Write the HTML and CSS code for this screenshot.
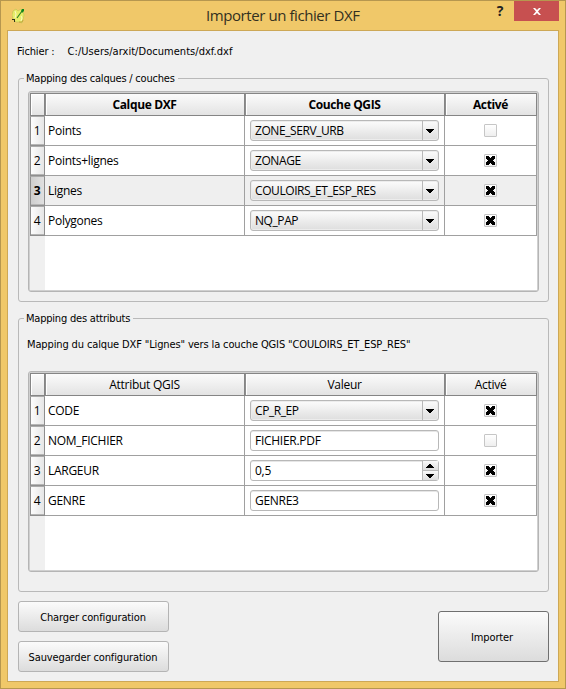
FILE: index.html
```html
<!DOCTYPE html>
<html lang="fr">
<head>
<meta charset="utf-8">
<title>Importer un fichier DXF</title>
<link rel="stylesheet" href="styles.css">
</head>
<body>
<svg class="defs" width="0" height="0">
  <symbol id="cross" viewBox="0 0 11 11"><path d="M1 1h3v1h1v1h1v-1h1v-1h3v3h-1v1h-1v1h1v1h1v3h-3v-1h-1v-1h-1v1h-1v1h-3v-3h1v-1h1v-1h-1v-1h-1z"/></symbol>
  <symbol id="down" viewBox="0 0 8 4"><path d="M0 0h8v1h-1v1h-1v1h-1v1h-2v-1h-1v-1h-1v-1h-1z"/></symbol>
  <symbol id="up" viewBox="0 0 8 4"><path d="M0 4h8v-1h-1v-1h-1v-1h-1v-1h-2v1h-1v1h-1v1h-1z"/></symbol>
</svg>
<div class="window">
  <header class="titlebar">
    <svg class="logo" width="13" height="16" viewBox="0 0 13 16">
      <path d="M1 3l3-2 2 2 3-2 2 2 1 4-1 5-1 3-3-1-3 0-3-3-1-4z" fill="#e6ec68" stroke="#c0bd55" stroke-width=".6"/>
      <path d="M3 3l1 3-1 4M9 8l1 2-1 3" fill="none" stroke="#faf8c0"/>
      <path d="M10 1h2v2l-2 2-1-2z" fill="#0f8a1c"/>
      <path d="M10 3L5 10" fill="none" stroke="#27801f" stroke-width="1.1"/>
      <path d="M0 11h3v3H2v-2H0z" fill="#30351a"/>
      <path d="M7 14h3l1-2" fill="none" stroke="#b99a35" stroke-width=".8"/>
    </svg>
    <h1>Importer un fichier DXF</h1>
    <span class="help">?</span>
    <button class="close" aria-label="Fermer"><svg width="8" height="7" viewBox="0 0 8 7"><path d="M0 0h2l2 2 2-2h2L5 3.5 8 7H6L4 5 2 7H0l3-3.5z" fill="#fff"/></svg></button>
  </header>
  <main class="client">
    <p class="file"><span>Fichier :</span><span class="path">C:/Users/arxit/Documents/dxf.dxf</span></p>

    <fieldset class="group layers">
      <legend>Mapping des calques / couches</legend>
      <div class="table">
        <div class="row head bold"><span class="num"></span><span>Calque DXF</span><span>Couche QGIS</span><span>Activé</span></div>
        <div class="row"><span class="num">1</span><span>Points</span><span class="edit"><span class="combo"><b>ZONE_SERV_URB</b><i><svg width="8" height="4"><use href="#down"/></svg></i></span></span><span class="act"><span class="check"></span></span></div>
        <div class="row"><span class="num">2</span><span>Points+lignes</span><span class="edit"><span class="combo"><b>ZONAGE</b><i><svg width="8" height="4"><use href="#down"/></svg></i></span></span><span class="act"><span class="check"><svg width="11" height="11"><use href="#cross"/></svg></span></span></div>
        <div class="row selected"><span class="num">3</span><span>Lignes</span><span class="edit"><span class="combo"><b>COULOIRS_ET_ESP_RES</b><i><svg width="8" height="4"><use href="#down"/></svg></i></span></span><span class="act"><span class="check"><svg width="11" height="11"><use href="#cross"/></svg></span></span></div>
        <div class="row"><span class="num">4</span><span>Polygones</span><span class="edit"><span class="combo"><b>NQ_PAP</b><i><svg width="8" height="4"><use href="#down"/></svg></i></span></span><span class="act"><span class="check"><svg width="11" height="11"><use href="#cross"/></svg></span></span></div>
        <div class="rest"></div>
      </div>
    </fieldset>

    <fieldset class="group attributes">
      <legend>Mapping des attributs</legend>
      <p class="hint">Mapping du calque DXF "Lignes" vers la couche QGIS "COULOIRS_ET_ESP_RES"</p>
      <div class="table">
        <div class="row head"><span class="num"></span><span>Attribut QGIS</span><span>Valeur</span><span>Activé</span></div>
        <div class="row"><span class="num">1</span><span>CODE</span><span class="edit"><span class="combo"><b>CP_R_EP</b><i><svg width="8" height="4"><use href="#down"/></svg></i></span></span><span class="act"><span class="check"><svg width="11" height="11"><use href="#cross"/></svg></span></span></div>
        <div class="row"><span class="num">2</span><span>NOM_FICHIER</span><span class="edit"><span class="combo field"><b>FICHIER.PDF</b></span></span><span class="act"><span class="check"></span></span></div>
        <div class="row"><span class="num">3</span><span>LARGEUR</span><span class="edit"><span class="combo field"><b>0,5</b><i class="spin"><em><svg width="8" height="4"><use href="#up"/></svg></em><em><svg width="8" height="4"><use href="#down"/></svg></em></i></span></span><span class="act"><span class="check"><svg width="11" height="11"><use href="#cross"/></svg></span></span></div>
        <div class="row"><span class="num">4</span><span>GENRE</span><span class="edit"><span class="combo field"><b>GENRE3</b></span></span><span class="act"><span class="check"><svg width="11" height="11"><use href="#cross"/></svg></span></span></div>
        <div class="rest"></div>
      </div>
    </fieldset>

    <footer class="actions">
      <div class="config">
        <button class="btn">Charger configuration</button>
        <button class="btn">Sauvegarder configuration</button>
      </div>
      <button class="btn import">Importer</button>
    </footer>
  </main>
</div>
</body>
</html>
```
FILE: styles.css
```css
* { box-sizing: border-box; }
body { margin: 0; font: 11px/14px "DejaVu Sans Condensed", "DejaVu Sans", sans-serif; font-stretch: condensed; letter-spacing: -0.13px; color: #000; }
p, h1, fieldset { margin: 0; padding: 0; }
svg { display: block; }
.defs { position: absolute; }
button { font: inherit; letter-spacing: inherit; color: inherit; padding: 0; }

.window { width: 566px; height: 689px; background: #f0c869; border: 1px solid #b6974f; padding: 0 6px 6px; display: flex; flex-direction: column; }
.titlebar { height: 29px; display: grid; grid-template-columns: 5px 13px 1fr 18px 5px 45px; align-items: start; }
.logo { grid-column: 2; margin-top: 7px; }
.titlebar h1 { grid-column: 3; justify-self: start; margin-left: 181px; font: 15px/28px "Open Sans", sans-serif; letter-spacing: -0.42px; color: #33301f; white-space: nowrap; }
.help { grid-column: 4; font: bold 14px/20px "Open Sans", sans-serif; color: #222; text-align: center; }
.close { grid-column: 6; height: 20px; border: 0; background: #c75050; display: grid; place-items: center; }

.client { flex: 1; background: #f0f0f0; border: 1px solid #cda856; padding: 14px 9px 9px 10px; display: flex; flex-direction: column; }
.file { height: 14px; margin-left: -1px; display: flex; gap: 13px; }
.path { letter-spacing: 0.04px; }
.group { border: 1px solid #b9b9b9; border-radius: 3px; padding: 0 9px; min-width: 0; width: 531px; }
.group legend { height: 14px; margin-left: -4px; padding: 1px 3px 0 2px; letter-spacing: -0.21px; }
.layers { margin-top: 12px; height: 231px; }
.attributes { margin-top: 9px; height: 281px; }
.layers .table { margin-top: 6px; }
.hint { height: 14px; margin: 13px 0 0 -1px; white-space: nowrap; }
.attributes .table { margin-top: 19px; }

.table { width: 511px; height: 201px; border: 1px solid #b5b5b5; border-radius: 3px; box-shadow: inset 0 0 0 1px #d0d0d0; padding: 1px; display: flex; flex-direction: column; font: 12px/16px "Open Sans", sans-serif; letter-spacing: -0.28px; }
.row { display: grid; grid-template-columns: 15px 200px 200px 92px; height: 30px; background: #fff; }
.row > span { border-right: 1px solid #a0a0a0; border-bottom: 1px solid #a0a0a0; padding-left: 3px; display: flex; align-items: center; }
.row > .num { border: 1px solid #8e8e8e; border-top-color: #aaa; padding: 0 1px 0 0; justify-content: center; background: linear-gradient(90deg, #fdfdfd, #e6e6e6); box-shadow: inset 0 -1px #b5b5b5; }
.row.head { height: 23px; }
.row.head > span { justify-content: center; padding: 0; background: linear-gradient(#fbfbfb, #e3e3e3); border: solid #858585; border-width: 1px 1px 1px 0; box-shadow: inset 1px 0 #8e8e8e, inset 2px 0 #fff; }
.row.head > .num { border-left-width: 1px; box-shadow: inset 1px 1px #fff; }
.row.bold > span { font-weight: bold; letter-spacing: -0.35px; }
.row.selected { background: #efefef; }
.row.selected > .num { font-weight: bold; background: linear-gradient(90deg, #cecece, #e0e0e0); }
.row > .edit { padding: 0 5px; }
.row > .act { justify-content: center; padding: 0; }
.rest { flex: 1; background: linear-gradient(90deg, #f0f0f0 15px, #fff 15px); }

.combo { width: 189px; height: 21px; border: 1px solid #b8b8b8; border-radius: 3px; background: linear-gradient(#fcfcfc, #dedede); box-shadow: inset 0 0 0 1px #ececec; display: flex; letter-spacing: -0.42px; }
.combo b { flex: 1; font-weight: normal; padding-left: 4px; line-height: 19px; }
.combo i { width: 16px; padding-right: 1px; border-left: 1px solid #b8b8b8; display: grid; place-items: center; }
.field { background: #fff; box-shadow: inset 0 1px #e6e6e6; letter-spacing: -0.28px; }
.combo .spin { padding: 0; grid-template-rows: 9px 10px; place-items: stretch; }
.spin em { padding-right: 1px; display: grid; place-items: center; background: linear-gradient(#fafafa, #dedede); }
.spin em + em { border-top: 1px solid #b8b8b8; }
.check { width: 13px; height: 13px; border: 1px solid #c6c6c6; border-radius: 1px; background: linear-gradient(#fff, #eee); }

.actions { margin-top: 9px; display: flex; justify-content: space-between; align-items: center; }
.config { display: flex; flex-direction: column; gap: 9px; }
.btn { width: 151px; height: 31px; padding: 2px 1px 0 0; border: 1px solid #b4b4b4; border-radius: 3px; background: linear-gradient(#fbfbfb, #dcdcdc); }
.import { width: 111px; height: 51px; padding: 2px 3px 0 0; border-color: #707070; }
```
